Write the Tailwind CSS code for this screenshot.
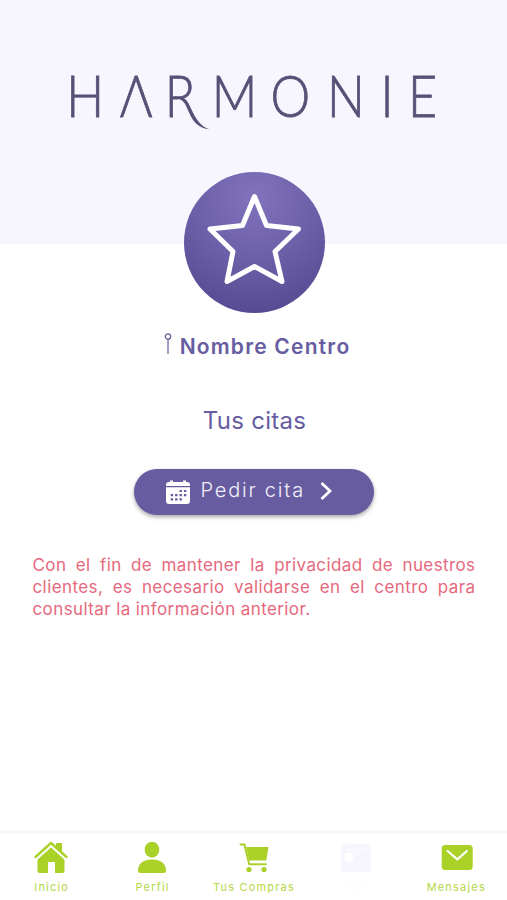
<!DOCTYPE html>
<html lang="es">
  <head>
    <meta charset="UTF-8" />
    <meta name="viewport" content="width=device-width, initial-scale=1.0" />
    <title>Harmonie</title>
    <script src="https://cdn.jsdelivr.net/npm/@tailwindcss/browser@4"></script>
  </head>
  <body class="bg-white font-['Inter',sans-serif]">
    <div class="flex flex-col h-[900px] w-full overflow-hidden">
      <!-- Header -->
      <header class="h-[244px] shrink-0 bg-[#f7f6fe] flex flex-col items-center pt-[60px]">
        <svg class="w-[507px] h-20 shrink-0" viewBox="0 60 507 80" fill="#575177" aria-label="Harmonie">
          <text class="font-['Lato',sans-serif] text-[57px] font-light" stroke="#575177" stroke-width=".8" transform="scale(.88 1)" y="116.8" x="75.2 136 187.300 240.500 307.4 371.6 432.300 463.600">HΛRMONIE</text>
          <!-- swash under the R -->
          <path d="M178 99h26v20h-26z" fill="#f7f6fe" />
          <path d="M174 96.500c12-1 14 5 17.500 13 4 9 9 17 18.500 20-12-1-17.500-9-21-17-4-9-5-14-15-14z" />
        </svg>
        <div class="mt-8 ml-0.5 w-[141px] h-[141px] shrink-0 rounded-full bg-[radial-gradient(circle_at_50%_18%,#8272bd_0%,#6c60a8_45%,#4f438c_100%)]">
          <svg class="w-full h-full" viewBox="0 0 141 141" fill="none" stroke="#fff" stroke-width="5" stroke-linejoin="round">
            <path d="M70.500 24.500 82.500 53.500 114.500 57 91 79.500 98 109.500 70.500 94.500 43 109.500 49 79.500 26 57 58.500 53.500z" />
          </svg>
        </div>
      </header>

      <main class="flex-1 flex flex-col items-center pt-[89px] text-[#665c9f]">
        <h1 class="flex items-start h-7 ml-2">
          <svg class="w-2 h-[22px] mr-2 -ml-px" viewBox="0 0 8 22" fill="none" stroke="#665c9f">
            <circle cx="4" cy="3.500" r="2.700" stroke-width="1.300" />
            <path d="M4 6v15" stroke-width="1.200" />
          </svg>
          <span class="text-[21px] leading-7 font-semibold tracking-[1.2px]">Nombre Centro</span>
        </h1>
        <h2 class="mt-11 ml-0.5 text-2xl leading-8 tracking-[0.3px]">Tus citas</h2>

        <button class="mt-8 w-60 h-[46px] rounded-full bg-[#665c9f] text-[#f2effb] flex items-center pl-8 pb-px shadow-[0_2px_4px_rgba(0,0,0,0.35)]">
          <svg class="w-6 h-6" viewBox="0 0 24 24" fill="#fff">
            <path d="M3 2h1V.500h3V2h10V.500h3V2h1q3 0 3 3v1H0V5q0-3 3-3z" />
            <path d="M0 7.200h24V21q0 3-3 3H3q-3 0-3-3z" />
            <path d="M13.500 11h7.500M4.700 15.200h16M4.700 19.400h11.500" stroke="#665c9f" stroke-width="2.200" stroke-dasharray="2.400 2" />
          </svg>
          <span class="ml-[11px] -mt-[3px] text-xl leading-7 font-light tracking-[1.8px]">Pedir cita</span>
          <svg class="ml-[15px] w-3 h-[18px] -mt-0.5" viewBox="0 0 12 18" fill="none" stroke="#fff" stroke-width="2.800">
            <path d="m1.500 1 8.500 8-8.500 8" />
          </svg>
        </button>

        <p class="mt-[39px] ml-px w-[443px] text-justify text-[17px] leading-[22px] tracking-[0.4px] text-[#e6687d]">
          Con el fin de mantener la privacidad de nuestros clientes, es necesario validarse en el centro para consultar la información anterior.
        </p>
      </main>

      <!-- Bottom tabs -->
      <nav class="h-[70px] shrink-0 border-t-4 border-[#f8f8f9] grid grid-cols-5 text-[11px] leading-4 tracking-[1.2px] text-[#b4d748]">
        <div class="flex flex-col items-center pt-[7px]">
          <svg class="w-[34px] h-[33px]" viewBox="0 0 34 33" fill="#a9d128">
            <path d="M22 10V3q0-1 1-1h4q1 0 1 1v12z" />
            <path d="m17 5.500 13.500 12.200V30q0 2-2 2H21V21h-7v11H5.500q-2 0-2-2V17.700z" />
            <path d="M1.500 18.500 17 4.500l15.500 14" fill="none" stroke="#fff" stroke-width="3" />
            <path d="M1.500 16 17 2l15.500 14" fill="none" stroke="#a9d128" stroke-width="2.400" stroke-linecap="round" stroke-linejoin="round" />
          </svg>
          <span class="mt-[5px] ml-0.5">Inicio</span>
        </div>
        <div class="flex flex-col items-center pt-[7px]">
          <svg class="w-[30px] h-[33px]" viewBox="0 0 30 33" fill="#a9d128">
            <ellipse cx="15" cy="8.700" rx="7.300" ry="8" />
            <path d="M1 29.500C1 23 6 18.500 15 18.500S29 23 29 29.500Q29 32 26.500 32h-23Q1 32 1 29.500z" />
          </svg>
          <span class="mt-[5px] ml-px">Perfil</span>
        </div>
        <div class="flex flex-col items-center pt-[7px]">
          <svg class="w-[30px] h-[33px] ml-0.5" viewBox="0 0 30 33" fill="#a9d128">
            <path d="M1.500 3.500h4l4.700 19.700H27" fill="none" stroke="#a9d128" stroke-width="2" stroke-linecap="round" />
            <path d="M7.200 6H29.500l-2.200 13.500H10.200z" />
            <circle cx="10" cy="28.500" r="2.600" />
            <circle cx="25" cy="28.500" r="2.600" />
          </svg>
          <span class="mt-[5px] ml-px whitespace-nowrap">Tus Compras</span>
        </div>
        <div class="flex flex-col items-center pt-[7px] text-[#fefeff]">
          <svg class="w-8 h-[33px] ml-0.5" viewBox="0 0 32 33" fill="#f7f6fe">
            <path d="M4 3h4V1.500h3V3h17q3 0 3 3v23q0 2-2 2H3q-2 0-2-2V6q0-3 3-3z" />
            <circle cx="9" cy="16" r="4.500" fill="#fff" />
            <path d="M5 8.500h23" stroke="#fcfcff" />
          </svg>
          <span class="mt-[5px]">Citas</span>
        </div>
        <div class="flex flex-col items-center pt-[7px]">
          <svg class="w-8 h-[33px] ml-0.5" viewBox="0 0 32 33" fill="#a9d128">
            <rect x=".700" y="4" width="31" height="25" rx="3.500" />
            <path d="m6 9.500 10.300 8.800L26.500 9.500" fill="none" stroke="#fff" stroke-width="2.200" stroke-linejoin="round" />
          </svg>
          <span class="mt-[5px]">Mensajes</span>
        </div>
      </nav>
    </div>
  </body>
</html>
